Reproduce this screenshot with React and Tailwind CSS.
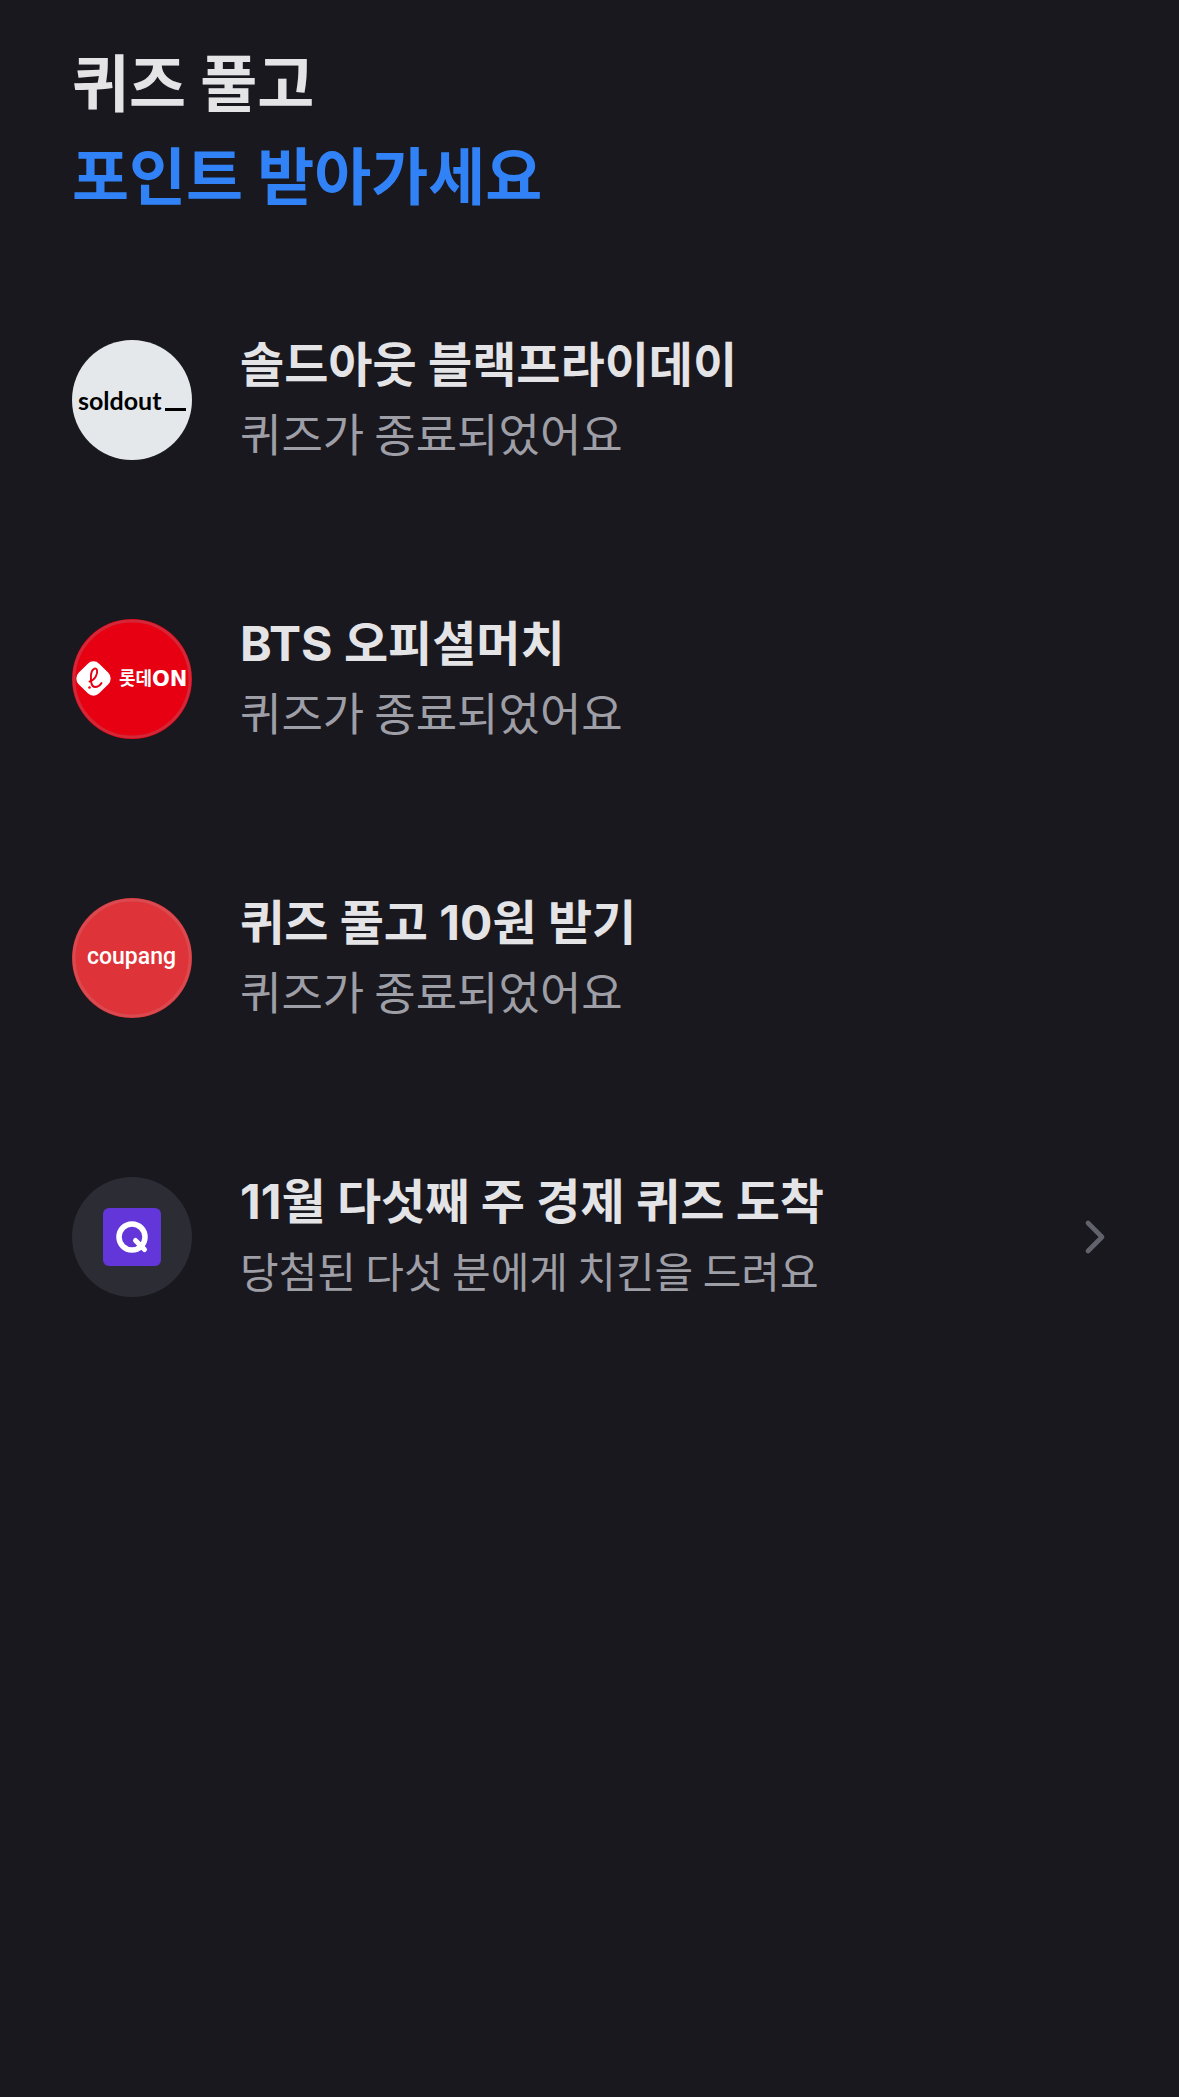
import { ChevronRight } from "lucide-react";

const SoldoutLogo = () => (
  <svg viewBox="0 0 120 120" className="size-full" role="img" aria-label="soldout">
    <circle cx="60" cy="60" r="60" fill="#e4e8eb" />
    <text x="6" y="70" fontSize="25" fontWeight="700" fill="#000" className="font-['Lato',sans-serif]">
      soldout
    </text>
    <rect x="93" y="68" width="21" height="3" fill="#000" />
  </svg>
);

const LotteOnLogo = () => (
  <svg viewBox="0 0 120 120" className="size-full" role="img" aria-label="롯데ON">
    <circle cx="60" cy="60" r="60" fill="#e60012" />
    <circle cx="60" cy="60" r="58" fill="none" stroke="#9a9aa8" strokeOpacity="0.25" strokeWidth="3" />
    <rect x="7" y="45" width="29" height="29" rx="8" fill="#fff" transform="rotate(45 21.5 59.5)" />
    <path
      d="M17.500 62.500C23 61 26 55 25 51C24 48 19.500 49.500 19 56C18.500 63 19.500 68 23 68C26 68 28 66.500 29.500 64"
      fill="none"
      stroke="#e60012"
      strokeWidth="1.900"
      strokeLinecap="round"
    />
    <circle cx="17.500" cy="68.500" r="1.300" fill="#e60012" />
    <text x="47" y="66" fontSize="18" fontWeight="700" fill="#fff" className="font-['Noto_Sans_CJK_KR',sans-serif]">
      롯데
    </text>
    <text x="80" y="67" fontSize="21" fontWeight="700" fill="#fff" className="font-['DejaVu_Sans',sans-serif]">
      ON
    </text>
  </svg>
);

const CoupangLogo = () => (
  <svg viewBox="0 0 120 120" className="size-full" role="img" aria-label="coupang">
    <circle cx="60" cy="60" r="60" fill="#de3439" />
    <circle cx="60" cy="60" r="58" fill="none" stroke="#c0c0d0" strokeOpacity="0.15" strokeWidth="3" />
    <text x="15" y="66" fontSize="23" fontWeight="500" fill="#fff" className="font-['Roboto',sans-serif]">
      coupang
    </text>
  </svg>
);

const QuizLogo = () => (
  <svg viewBox="0 0 120 120" className="size-full" role="img" aria-label="Q">
    <circle cx="60" cy="60" r="60" fill="#2c2c35" />
    <rect x="31" y="31" width="58" height="58" rx="6" fill="#6236d9" />
    <circle cx="60" cy="60" r="13" fill="none" stroke="#fff" strokeWidth="5.500" />
    <path d="M63.500 63.500L72.500 72.500" stroke="#fff" strokeWidth="5" strokeLinecap="round" />
  </svg>
);

const quizzes = [
  { title: "솔드아웃 블랙프라이데이", description: "퀴즈가 종료되었어요", Logo: SoldoutLogo },
  { title: "BTS 오피셜머치", description: "퀴즈가 종료되었어요", Logo: LotteOnLogo },
  { title: "퀴즈 풀고 10원 받기", description: "퀴즈가 종료되었어요", Logo: CoupangLogo },
  {
    title: "11월 다섯째 주 경제 퀴즈 도착",
    description: "당첨된 다섯 분에게 치킨을 드려요",
    Logo: QuizLogo,
    href: "#quiz",
  },
];

const QuizRow = ({ title, description, Logo, href }) => {
  const Row = href ? "a" : "div";

  return (
    <Row href={href} className="flex items-center gap-12">
      <div className="size-[120px] shrink-0">
        <Logo />
      </div>
      <div className="min-w-0 flex-1 pb-1">
        <h2 className="font-['Inter','Noto_Sans_CJK_KR',sans-serif] text-[48px] leading-[70px] font-bold text-[#e4e4e7]">
          {title}
        </h2>
        <p className={`leading-[66px] text-[#9e9ea6] ${href ? "text-[42px]" : "text-[45px]"}`}>
          {description}
        </p>
      </div>
      {href && <ChevronRight className="-mr-4 size-14 shrink-0 text-[#62626d]" strokeWidth={2} />}
    </Row>
  );
};

export default function App() {
  return (
    <main className="min-h-screen bg-[#19181e] px-[72px] pt-[34px] font-['Noto_Sans_CJK_KR',sans-serif]">
      <h1 className="text-[62px] leading-[93px] font-bold text-[#e4e4e7]">
        퀴즈 풀고
        <span className="block text-[#3182f6]">포인트 받아가세요</span>
      </h1>
      <ul className="mt-[110px] flex flex-col gap-[139px]">
        {quizzes.map((quiz) => (
          <li key={quiz.title}>
            <QuizRow {...quiz} />
          </li>
        ))}
      </ul>
    </main>
  );
}
